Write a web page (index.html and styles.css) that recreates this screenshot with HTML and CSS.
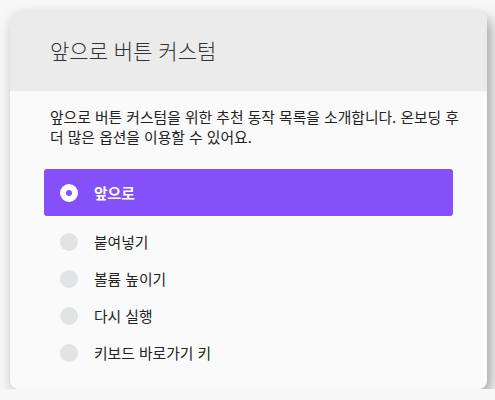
FILE: index.html
```html
<!DOCTYPE html>
<html lang="ko">
<head>
<meta charset="utf-8">
<link rel="stylesheet" href="styles.css">
</head>
<body>
<div class="card">
  <div class="header">앞으로 버튼 커스텀</div>
  <div class="body">
    <p class="desc">앞으로 버튼 커스텀을 위한 추천 동작 목록을 소개합니다. 온보딩 후 더 많은 옵션을 이용할 수 있어요.</p>
    <div class="list">
      <div class="item selected"><span class="radio"></span><span class="label">앞으로</span></div>
      <div class="item"><span class="radio"></span><span class="label">붙여넣기</span></div>
      <div class="item"><span class="radio"></span><span class="label">볼륨 높이기</span></div>
      <div class="item"><span class="radio"></span><span class="label">다시 실행</span></div>
      <div class="item"><span class="radio"></span><span class="label">키보드 바로가기 키</span></div>
    </div>
  </div>
</div>
</body>
</html>
```

FILE: styles.css
```css
html, body {
  margin: 0;
  padding: 0;
  background: #f7f7f7;
}
body {
  font-family: "Noto Sans CJK KR", "Noto Sans", sans-serif;
  color: #222;
  padding: 12px 8px 0 10px;
}
.card {
  width: 477px;
  height: 377px;
  border-radius: 8px;
  background: #fafafa;
  overflow: hidden;
  box-shadow: 4px 6px 14px rgba(0, 0, 0, 0.35);
  display: flex;
  flex-direction: column;
}
.header {
  height: 79px;
  background: #ebebeb;
  display: flex;
  align-items: center;
  padding-left: 40px;
  font-size: 21px;
  font-weight: 300;
  color: #333;
  padding-bottom: 4px;
  box-sizing: border-box;
}
.body {
  padding: 16px 34px 0 34px;
}
.desc {
  margin: 0 0 22px 6px;
  font-size: 14.8px;
  line-height: 20px;
  width: 425px;
  color: #222;
}
.list {
  display: flex;
  flex-direction: column;
}
.item {
  display: flex;
  align-items: center;
  height: 37px;
  padding-left: 16px;
  font-size: 14.8px;
  color: #222;
}
.item.selected {
  height: 47px;
  background: #8450fa;
  border-radius: 3px;
  color: #fff;
  font-weight: bold;
  margin-bottom: 7px;
}
.radio {
  width: 18px;
  height: 18px;
  border-radius: 50%;
  background: #e2e3e5;
  margin-right: 16px;
  box-sizing: border-box;
  flex: none;
}
.selected .radio {
  background: #8450fa;
  border: 6px solid #fff;
}
```
